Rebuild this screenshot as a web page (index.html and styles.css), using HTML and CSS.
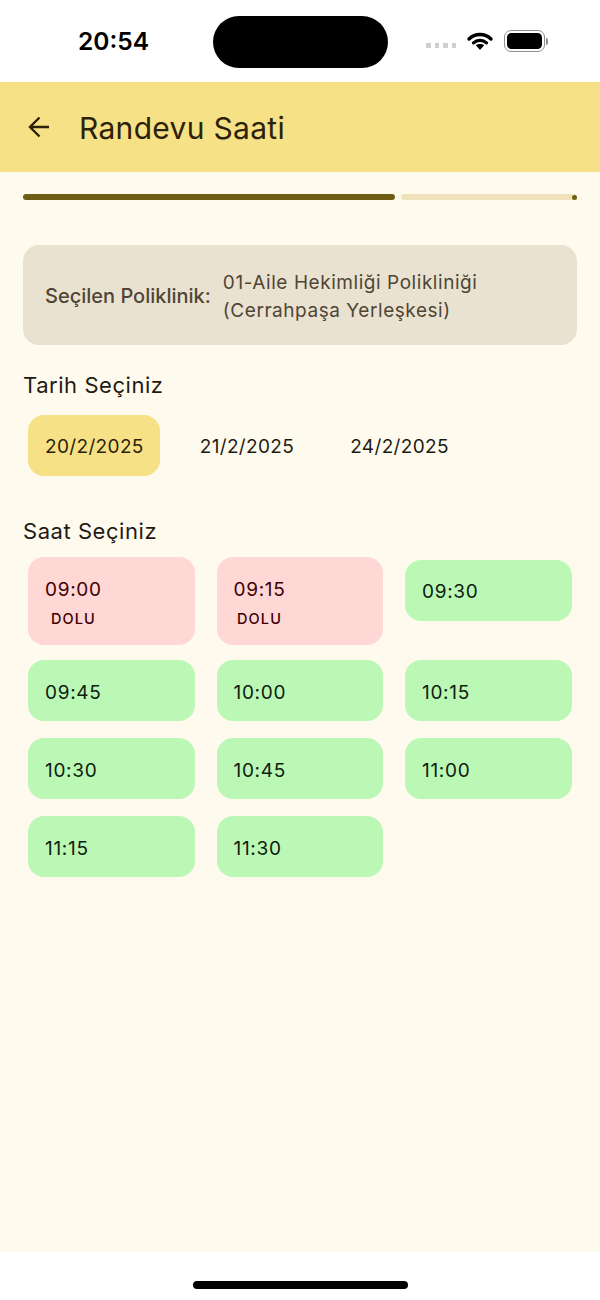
FILE: index.html
```html
<!DOCTYPE html>
<html lang="tr">
<head>
    <meta charset="UTF-8">
    <meta name="viewport" content="width=device-width, initial-scale=1.0">
    <title>Randevu Saati</title>
    <link rel="stylesheet" href="styles.css">
</head>
<body>
    <div class="phone">
        <div class="status-bar">
            <div class="clock">20:54</div>
            <div class="island"></div>
            <div class="status-icons">
                <div class="signal"><span></span><span></span><span></span><span></span></div>
                <svg class="wifi" width="28" height="20" viewBox="0 0 28 20">
                    <path d="M14 3.5c-4.300 0-8.200 1.700-11 4.500" fill="none" stroke="#000" stroke-width="3.400" stroke-linecap="round"/>
                    <path d="M14 3.500c4.300 0 8.200 1.700 11 4.500" fill="none" stroke="#000" stroke-width="3.400" stroke-linecap="round"/>
                    <path d="M7.500 11.800c1.700-1.600 4-2.500 6.500-2.500s4.800.9 6.500 2.500" fill="none" stroke="#000" stroke-width="3.200" stroke-linecap="round"/>
                    <path d="M9.800 14.300c1.100-.9 2.600-1.400 4.200-1.400s3.100.5 4.200 1.400L14 19z" fill="#000"/>
                </svg>
                <div class="battery"><div class="battery-fill"></div></div>
                <div class="battery-cap"></div>
            </div>
        </div>
        <header class="app-bar">
            <svg class="back" width="24" height="24" viewBox="0 0 24 24">
                <path d="M22 12H3.500M12.500 2.500 3 12l9.500 9.500" fill="none" stroke="#2c2208" stroke-width="2.400"/>
            </svg>
            <h1 class="title">Randevu Saati</h1>
        </header>
        <main class="content">
            <div class="progress">
                <div class="progress-done"></div>
                <div class="progress-rest"><div class="progress-dot"></div></div>
            </div>
            <div class="clinic-card">
                <div class="clinic-label">Seçilen Poliklinik:</div>
                <div class="clinic-name">01-Aile Hekimliği Polikliniği<br>(Cerrahpaşa Yerleşkesi)</div>
            </div>
            <h2 class="section-title">Tarih Seçiniz</h2>
            <div class="date-row">
                <div class="date-chip selected">20/2/2025</div>
                <div class="date-chip">21/2/2025</div>
                <div class="date-chip">24/2/2025</div>
            </div>
            <h2 class="section-title time-title">Saat Seçiniz</h2>
            <div class="time-grid">
                <div class="slot busy">
                    <div class="busy-inner"><span class="busy-time">09:00</span><span class="busy-label">DOLU</span></div>
                </div>
                <div class="slot busy">
                    <div class="busy-inner"><span class="busy-time">09:15</span><span class="busy-label">DOLU</span></div>
                </div>
                <div class="slot free first-row">09:30</div>
                <div class="slot free">09:45</div>
                <div class="slot free">10:00</div>
                <div class="slot free">10:15</div>
                <div class="slot free">10:30</div>
                <div class="slot free">10:45</div>
                <div class="slot free">11:00</div>
                <div class="slot free">11:15</div>
                <div class="slot free">11:30</div>
            </div>
        </main>
        <div class="home-area"><div class="home-bar"></div></div>
    </div>
</body>
</html>
```

FILE: styles.css
```css
* {
    box-sizing: border-box;
}
body {
    margin: 0;
    background: #fff;
    font-family: Inter, "Liberation Sans", sans-serif;
}
.phone {
    width: 600px;
    height: 1300px;
    display: flex;
    flex-direction: column;
}
.status-bar {
    height: 82px;
    flex-shrink: 0;
    background: #fff;
    position: relative;
}
.clock {
    position: absolute;
    left: 78px;
    top: 26px;
    font-size: 24.500px;
    line-height: 30px;
    font-weight: 600;
    color: #000;
}
.island {
    position: absolute;
    left: 212.500px;
    top: 16px;
    width: 175px;
    height: 51.500px;
    border-radius: 26px;
    background: #000;
}
.status-icons {
    position: absolute;
    left: 426px;
    top: 30px;
    display: flex;
    align-items: center;
}
.signal {
    display: flex;
    gap: 4px;
    margin-top: 8px;
}
.signal span {
    width: 4.500px;
    height: 5px;
    background: #cfcfcf;
}
.wifi {
    margin: -1px 0 0 10px;
}
.battery {
    width: 41px;
    height: 22px;
    margin-left: 10px;
    border: 1.500px solid #8e8e8e;
    border-radius: 7px;
    padding: 2px;
}
.battery-fill {
    width: 100%;
    height: 100%;
    background: #000;
    border-radius: 4.500px;
}
.battery-cap {
    width: 2px;
    height: 7px;
    margin-left: 1px;
    background: #8e8e8e;
    border-radius: 0 2px 2px 0;
}
.app-bar {
    height: 90px;
    flex-shrink: 0;
    background: #f7e186;
    display: flex;
    align-items: center;
    padding-left: 27px;
    gap: 28px;
}
.title {
    margin: 2px 0 0;
    font-size: 30px;
    line-height: 36px;
    font-weight: 400;
    letter-spacing: .3px;
    color: #2c2208;
}
.content {
    flex: 1;
    background: #fffaee;
    padding: 22px 23px 0;
}
.progress {
    display: flex;
    gap: 6px;
    height: 6px;
}
.progress-done {
    width: 372px;
    background: #6f5d14;
    border-radius: 3px;
}
.progress-rest {
    flex: 1;
    background: #efe2bb;
    border-radius: 3px;
    display: flex;
    justify-content: flex-end;
}
.progress-dot {
    width: 5px;
    height: 5px;
    margin-top: .5px;
    background: #6f5d14;
    border-radius: 50%;
}
.clinic-card {
    height: 100.500px;
    margin-top: 44.500px;
    padding: 2px 22px 0;
    background: #e9e2d0;
    border-radius: 16px;
    display: flex;
    align-items: center;
    gap: 12px;
    color: #504535;
}
.clinic-label {
    font-size: 20px;
    font-weight: 500;
}
.clinic-name {
    font-size: 19px;
    line-height: 28px;
    letter-spacing: .55px;
    margin-top: 2px;
}
.section-title {
    margin: 0;
    font-size: 22px;
    line-height: 28px;
    font-weight: 400;
    letter-spacing: .55px;
    color: #1e1b13;
}
.clinic-card + .section-title {
    margin-top: 26px;
}
.date-row {
    display: flex;
    margin-top: 15.500px;
    padding-left: 5px;
    gap: 23px;
}
.date-chip {
    height: 61px;
    padding: 3px 16px 0 17px;
    display: flex;
    align-items: center;
    border-radius: 16px;
    font-size: 19px;
    letter-spacing: .35px;
    color: #1e1b13;
}
.date-chip.selected {
    background: #f7e186;
    color: #2c2208;
}
.time-title {
    margin-top: 41.500px;
}
.time-grid {
    display: grid;
    grid-template-columns: repeat(3, 166.500px);
    column-gap: 22px;
    row-gap: 17px;
    margin-top: 12px;
    padding-left: 5px;
    align-items: start;
}
.slot {
    height: 61px;
    padding: 3px 0 0 17px;
    display: flex;
    flex-direction: column;
    justify-content: center;
    border-radius: 16px;
    font-size: 19px;
    letter-spacing: .7px;
}
.slot.free {
    background: #bbf7b5;
    color: #0e2010;
}
.slot.first-row {
    margin-top: 2.500px;
}
.slot.busy {
    height: 88px;
    margin-bottom: -2px;
    align-items: flex-start;
    background: #ffd7d4;
    color: #410006;
}
.busy-inner {
    display: flex;
    flex-direction: column;
    align-items: center;
}
.busy-time {
    align-self: flex-start;
}
.busy-label {
    margin-top: 9px;
    font-size: 14.500px;
    line-height: 17px;
    font-weight: 500;
    letter-spacing: 1.100px;
}
.home-area {
    height: 48px;
    flex-shrink: 0;
    background: #fff;
    display: flex;
    justify-content: center;
    padding-top: 29px;
}
.home-bar {
    width: 215px;
    height: 8px;
    background: #000;
    border-radius: 4px;
}
```
